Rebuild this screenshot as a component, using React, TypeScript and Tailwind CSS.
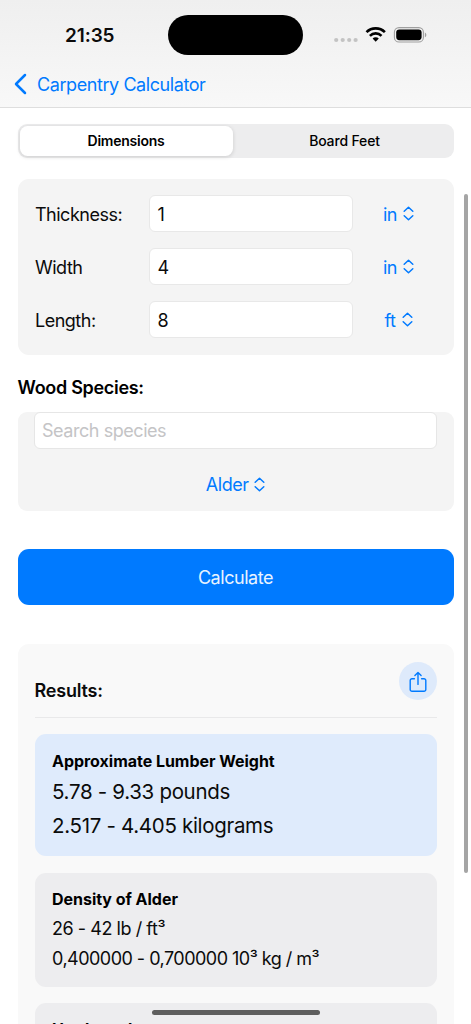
import React from "react";

const fields = [
  { label: "Thickness:", value: "1", unit: "in" },
  { label: "Width", value: "4", unit: "in" },
  { label: "Length:", value: "8", unit: "ft" },
];

function UpDown() {
  return (
    <svg width="11" height="16" viewBox="0 0 11 16" fill="none" stroke="currentColor" strokeWidth="1.5" strokeLinecap="round" strokeLinejoin="round">
      <path d="M1.2 5.2 5.5 1.2l4.3 4M1.2 9.8l4.3 4 4.3-4" />
    </svg>
  );
}

function StatusBar() {
  return (
    <div className="flex h-[61px] items-start">
      <div className="w-[168px] pt-[22px] pl-[65px] text-[19px] leading-[27px] font-semibold tracking-[-0.1px]">21:35</div>
      <div className="mt-[15px] h-[39.5px] w-[135px] rounded-full bg-black" />
      <div className="flex flex-1 items-start pt-[26px] pl-[31px]">
        <svg width="25" height="20" viewBox="0 0 25 20" fill="#c3c3c3">
          <circle cx="2.2" cy="14" r="2.1" />
          <circle cx="8.7" cy="14" r="2.1" />
          <circle cx="15.2" cy="14" r="2.1" />
          <circle cx="21.6" cy="14" r="2.1" />
        </svg>
        <svg className="ml-[6px]" width="22" height="18" viewBox="0 0 22 18" fill="none" stroke="#000" strokeWidth="2.6">
          <path d="M1.5 6.2a13 13 0 0 1 18.4 0" />
          <path d="M4.9 9.8a8.2 8.2 0 0 1 11.6 0" />
          <path d="M7.6 12.6a4.4 4.4 0 0 1 6.2 0L10.7 15.8Z" fill="#000" stroke="none" />
        </svg>
        <svg className="ml-[6px]" width="35" height="18" viewBox="0 0 35 18">
          <rect x="1.4" y="1.6" width="29" height="14.4" rx="4.6" fill="none" stroke="#9f9f9f" strokeWidth="1.1" />
          <rect x="3.2" y="3.4" width="25.4" height="10.8" rx="3.1" fill="#000" />
          <path d="M31.9 6.4c1.9.8 1.9 4 0 4.8Z" fill="#9f9f9f" />
        </svg>
      </div>
    </div>
  );
}

export default function App() {
  return (
    <div className="relative h-[1024px] w-[471px] overflow-hidden bg-white font-['Inter','Liberation_Sans',sans-serif] text-[18px] tracking-[-0.45px] text-[#0b0b0b]">
      <header className="h-[108px] border-b border-[#dedede] bg-linear-to-b from-[#efefef] to-[#f8f8f8]">
        <StatusBar />
        <div className="flex h-[46px] items-center pl-[14px] text-[#007aff]">
          <svg width="14" height="22" viewBox="0 0 14 22" fill="none" stroke="currentColor" strokeWidth="2.5" strokeLinecap="round" strokeLinejoin="round">
            <path d="M11 2 2 11l9 9" />
          </svg>
          <span className="ml-[9px] tracking-[-0.42px]">Carpentry Calculator</span>
        </div>
      </header>

      <main className="px-[17.5px] pt-4">
        <div className="flex h-[34px] rounded-[9px] bg-[#ededee] p-[2px] text-[14px] leading-[30px] text-black">
          <div className="w-[213px] rounded-[7.5px] bg-white text-center font-semibold tracking-[-0.25px] shadow-[0_1px_4px_rgba(0,0,0,0.14)]">Dimensions</div>
          <div className="flex-1 pl-[5px] text-center font-medium tracking-[-0.15px]">Board Feet</div>
        </div>

        <section className="mt-[20.5px] flex h-[176.5px] flex-col gap-4 rounded-[11px] bg-[#f4f4f4] pt-[16.7px]">
          {fields.map((f) => (
            <div key={f.label} className="flex h-[37px] items-center pl-[17.5px]">
              <span className="w-[114px] pt-[2px] tracking-[-0.5px]">{f.label}</span>
              <div className="flex h-[37px] w-[204px] items-center rounded-[6px] border border-[#e8e8e8] bg-white pt-[2px] pl-[7.5px]">{f.value}</div>
              <div className="flex w-[91px] items-center justify-center gap-[6px] text-[#007aff]">
                <span className="pt-[2px]">{f.unit}</span>
                <UpDown />
              </div>
            </div>
          ))}
        </section>

        <h2 className="mt-[19px] h-[27px] leading-[27px] font-semibold tracking-[-0.3px] text-black">Wood Species:</h2>

        <section className="mt-[11px] h-[98.5px] rounded-[9px] bg-[#f4f4f4] px-[16.5px]">
          <div className="flex h-[37px] items-center rounded-[6px] border border-[#e6e6e6] bg-white pl-[7px] text-[#c4c4c6]">
            <span>Search species</span>
          </div>
          <div className="mt-[17px] flex h-[37px] items-center justify-center gap-[5.5px] text-[#007aff]">
            <span>Alder</span>
            <UpDown />
          </div>
        </section>

        <button className="mt-[38.4px] flex h-[56px] w-full items-center justify-center rounded-[11px] bg-[#007aff] pt-[2px] text-[#e9f3ff]">
          <span>Calculate</span>
        </button>

        <section className="mt-[39px] h-[420px] rounded-[11px] bg-[#f9f9f9] px-[17px] pt-[18.5px]">
          <div className="flex h-[56px] items-start justify-between border-b border-[#e9e9ea]">
            <h2 className="mt-[14.2px] leading-[27px] font-semibold tracking-[-0.2px]">Results:</h2>
            <div className="flex h-[37.5px] w-[37.5px] items-center justify-center rounded-full bg-[#deeafb] pt-[2px] text-[#007aff]">
              <svg width="18" height="22" viewBox="0 0 18 22" fill="none" stroke="currentColor" strokeWidth="1.4" strokeLinecap="round" strokeLinejoin="round">
                <path d="M5.4 7.7H3a1.8 1.8 0 0 0-1.8 1.8v9A1.8 1.8 0 0 0 3 20.3h12a1.8 1.8 0 0 0 1.8-1.8v-9A1.8 1.8 0 0 0 15 7.7h-2.4" />
                <path d="M9 13.4V1.5M5.9 4.6 9 1.5l3.1 3.1" />
              </svg>
            </div>
          </div>

          <article className="mt-4 h-[122px] rounded-[11px] bg-[#dfebfc] px-[17.5px] pt-[14.6px]">
            <h3 className="text-[16px] leading-[24px] font-bold tracking-[-0.03px] text-black">Approximate Lumber Weight</h3>
            <p className="mt-[2.4px] text-[20.5px] leading-[34px] tracking-[-0.31px]">5.78 - 9.33 pounds</p>
            <p className="text-[20.5px] leading-[34px] tracking-[-0.31px]">2.517 - 4.405 kilograms</p>
          </article>

          <article className="mt-[16.3px] h-[114px] rounded-[11px] bg-[#ededef] px-[17.5px] pt-[14.3px]">
            <h3 className="text-[16px] leading-[24px] font-bold tracking-[-0.03px] text-black">Density of Alder</h3>
            <p className="mt-[3px] leading-[30px]">26 - 42 lb / ft³</p>
            <p className="leading-[30px] tracking-[-0.52px]">0,400000 - 0,700000 10³ kg / m³</p>
          </article>

          <article className="mt-[16.3px] h-[114px] rounded-[11px] bg-[#ededef] px-[17.5px] pt-[14.5px]">
            <h3 className="text-[16px] leading-[24px] font-bold tracking-[-0.03px] text-black">Hardwood</h3>
          </article>
        </section>
      </main>

      <div className="absolute top-[194px] left-[464px] h-[679px] w-[3.5px] rounded-full bg-[#a5a5a5]" />
      <div className="absolute top-[1009.5px] left-[152px] h-[5.5px] w-[168px] rounded-full bg-[#5e5e5e]" />
    </div>
  );
}
